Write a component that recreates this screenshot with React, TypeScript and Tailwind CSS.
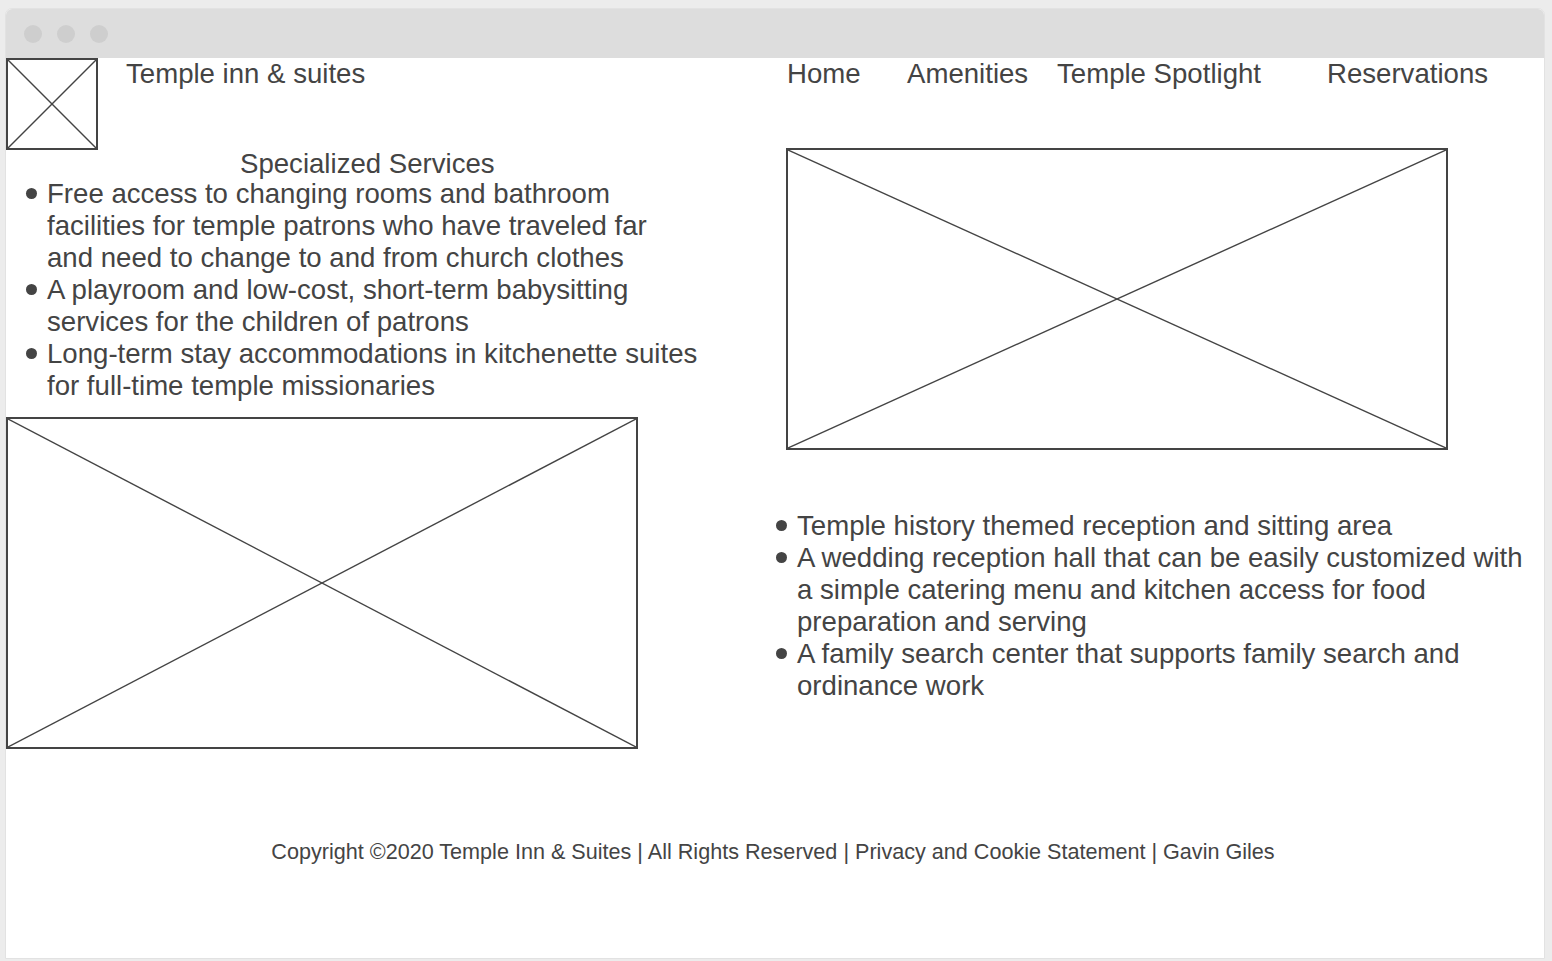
const XBox = ({ className }: { className: string }) => (
  <div className={`border-2 border-[#444] ${className}`}>
    <svg className="block h-full w-full" viewBox="0 0 100 100" preserveAspectRatio="none">
      <line x1="0" y1="0" x2="100" y2="100" stroke="#444" strokeWidth="1.4" vectorEffect="non-scaling-stroke" />
      <line x1="100" y1="0" x2="0" y2="100" stroke="#444" strokeWidth="1.4" vectorEffect="non-scaling-stroke" />
    </svg>
  </div>
);

const Bullet = ({ lines }: { lines: string[] }) => (
  <li className="flex items-start gap-[10px]">
    <span className="mt-[10px] h-[11px] w-[11px] shrink-0 rounded-full bg-[#444]" />
    <span>
      {lines.map((l) => (
        <span key={l} className="block whitespace-nowrap">
          {l}
        </span>
      ))}
    </span>
  </li>
);

const leftItems = [
  [
    "Free access to changing rooms and bathroom",
    "facilities for temple patrons who have traveled far",
    "and need to change to and from church clothes",
  ],
  ["A playroom and low-cost, short-term babysitting", "services for the children of patrons"],
  ["Long-term stay accommodations in kitchenette suites", "for full-time temple missionaries"],
];

const rightItems = [
  ["Temple history themed reception and sitting area"],
  [
    "A wedding reception hall that can be easily customized with",
    "a simple catering menu and kitchen access for food",
    "preparation and serving",
  ],
  ["A family search center that supports family search and", "ordinance work"],
];

export default function App() {
  return (
    <div className="h-screen w-full overflow-hidden bg-[#ececec] pl-[5px] pt-[8px] font-['Liberation_Sans',Arial,sans-serif] text-[#444]">
      <div className="flex h-[951px] w-[1540px] flex-col overflow-hidden rounded-t-[7px] border border-[#e2e2e2] bg-white">
        {/* title bar */}
        <div className="flex h-[49px] shrink-0 items-center gap-[15px] bg-[#dddddd] pl-[18px]">
          <span className="h-[18px] w-[18px] rounded-full bg-[#cecece]" />
          <span className="h-[18px] w-[18px] rounded-full bg-[#cecece]" />
          <span className="h-[18px] w-[18px] rounded-full bg-[#cecece]" />
        </div>

        <div className="flex text-[27.6px] leading-[32px]">
          {/* left column */}
          <div className="w-[768px] shrink-0">
            <div className="flex items-start">
              <XBox className="h-[92px] w-[92px]" />
              <span className="ml-[28px]">Temple inn &amp; suites</span>
            </div>
            <h2 className="-mt-px pl-[234px] leading-[29px]">Specialized Services</h2>
            <ul className="pl-[20px]">
              {leftItems.map((it) => (
                <Bullet key={it[0]} lines={it} />
              ))}
            </ul>
            <XBox className="mt-[15px] h-[332px] w-[632px]" />
          </div>

          {/* right column */}
          <div className="flex-1">
            <nav className="flex pl-[13px]">
              <span className="w-[120px]">Home</span>
              <span className="w-[150px]">Amenities</span>
              <span className="w-[270px]">Temple Spotlight</span>
              <span>Reservations</span>
            </nav>
            <XBox className="ml-[12px] mt-[58px] h-[302px] w-[662px]" />
            <ul className="mt-[60px] pl-[2px]">
              {rightItems.map((it) => (
                <Bullet key={it[0]} lines={it} />
              ))}
            </ul>
          </div>
        </div>

        <footer className="mt-[91px] pr-[4px] text-center text-[21.6px] leading-[24px]">
          Copyright ©2020 Temple Inn &amp; Suites | All Rights Reserved | Privacy and Cookie Statement | Gavin Giles
        </footer>
      </div>
    </div>
  );
}
